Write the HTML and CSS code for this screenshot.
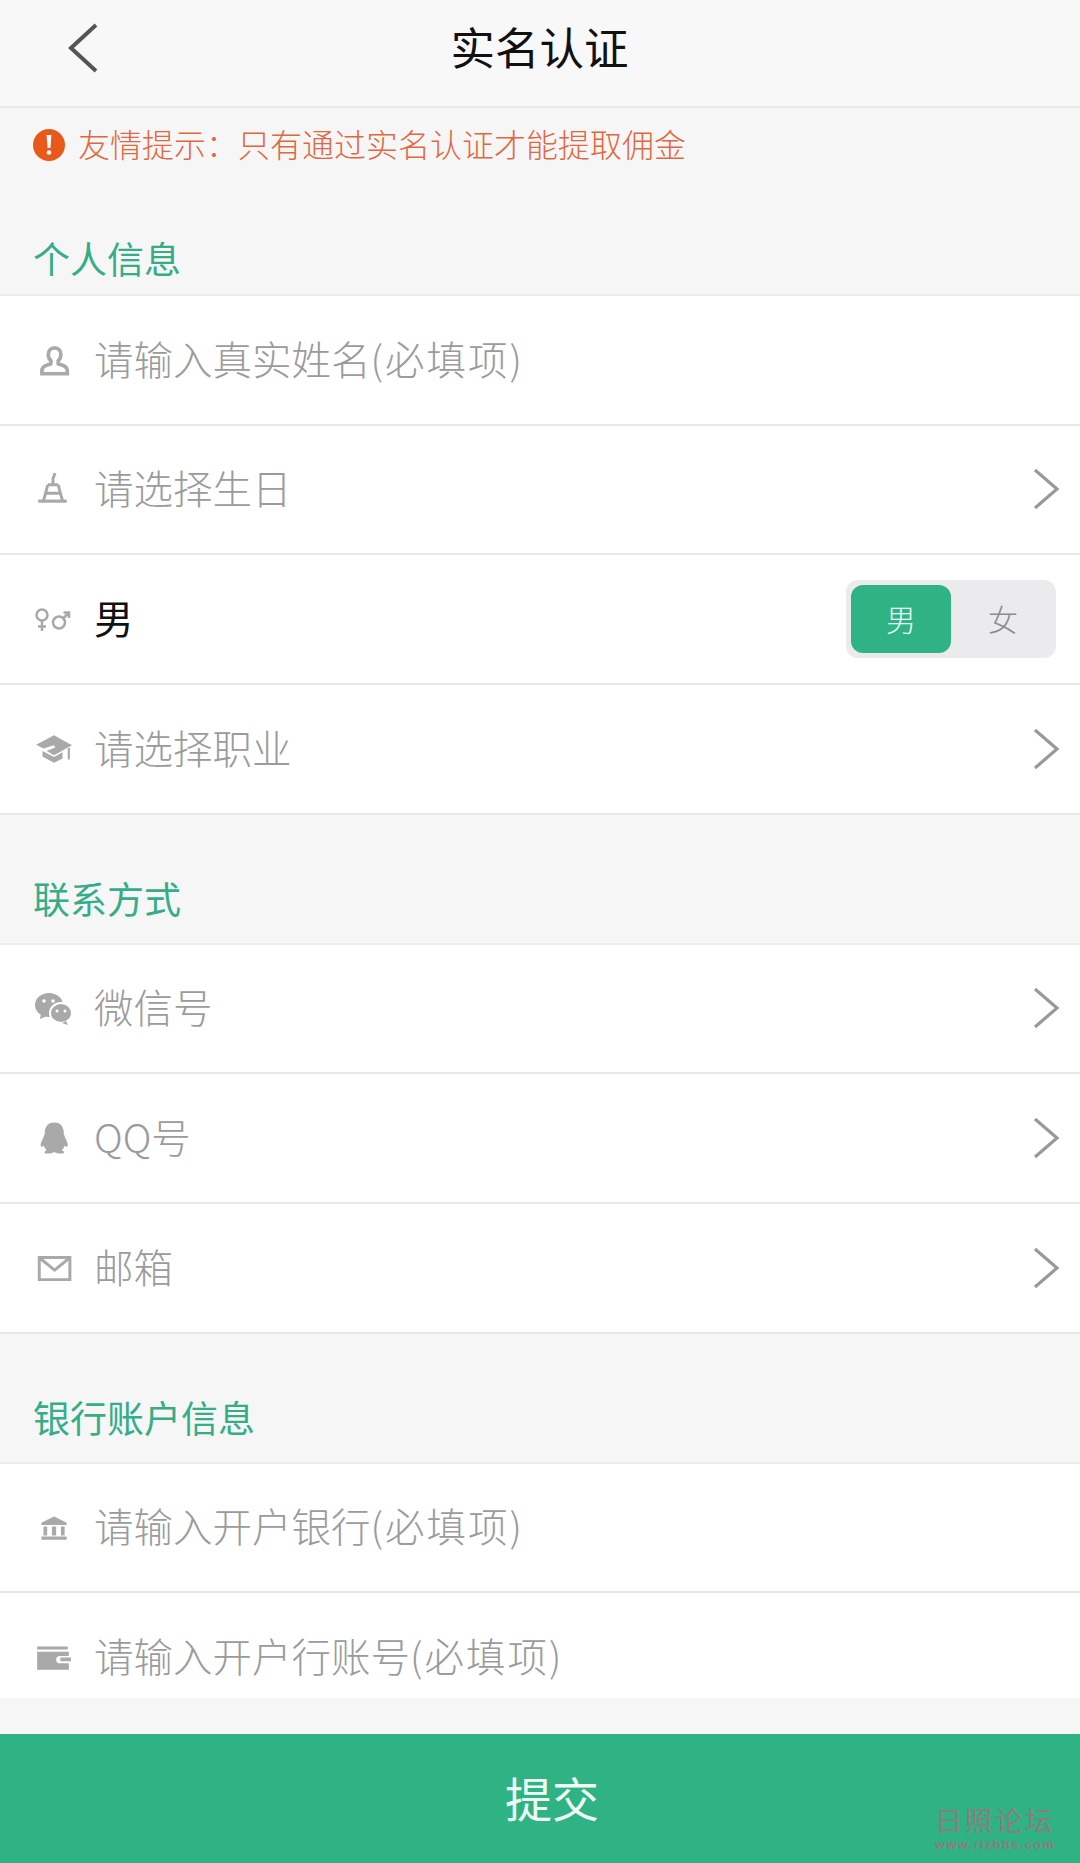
FILE: index.html
```html
<!DOCTYPE html>
<html lang="zh-CN">
<head>
  <meta charset="UTF-8" />
  <meta name="viewport" content="width=device-width, initial-scale=1.0" />
  <title>实名认证</title>
  <link rel="stylesheet" href="styles.css">
</head>
<body>
  <div class="page">
    <header class="topbar">
      <svg class="back" viewBox="0 0 32 52"><path d="M29 3 L4 26 L29 49" /></svg>
      <h1>实名认证</h1>
    </header>

    <div class="notice">
      <svg class="notice-icon" viewBox="0 0 32 32"><ellipse cx="16" cy="16" rx="16" ry="16" fill="#e9591c" /><path d="M13.6 6h4.8l-1 13h-2.800z" fill="#fff" /><circle cx="16" cy="23.500" r="2.300" fill="#fff" /></svg>
      <span>友情提示：只有通过实名认证才能提取佣金</span>
    </div>

    <div class="section-title first">个人信息</div>
    <div class="group">
      <div class="row">
        <svg class="icon" viewBox="0 0 36 36"><path class="line" d="M19.500 6.500c-4 0-6 3-6 6.500 0 2.500 1.200 4.500 2.500 5.800v2.700c-2 1.500-8.500 1.500-8.500 6.500v3h24v-3c0-5-6.500-5-8.500-6.500v-2.700c1.300-1.300 2.500-3.300 2.500-5.800 0-3.500-2-6.500-6-6.500z" /></svg>
        <span class="label">请输入真实姓名<span class="req">(必填项)</span></span>
      </div>
      <div class="row">
        <svg class="icon" viewBox="0 0 36 36"><path class="line slim" d="M20 3l-2 5v6M13 14h10M13 14l-2 8h14l-2-8M11 22l-2 7M25 22l2 7" /><path fill="#a9a9a9" d="M4 28h27v3H4z" /></svg>
        <span class="label">请选择生日</span>
        <svg class="chevron" viewBox="0 0 28 44"><path d="M3 3 L25 22 L3 41" /></svg>
      </div>
      <div class="row">
        <svg class="icon" viewBox="0 0 38 36"><g class="thin"><circle cx="8" cy="14" r="5.500" /><path d="M8 19.500V30M4 25.500h8" /><circle cx="25" cy="21.500" r="6" /><path d="M29.500 17l5.500-5.500M29.500 11.500H35V17" /></g></svg>
        <span class="value">男</span>
        <div class="gender">
          <span class="gender-btn active">男</span>
          <span class="gender-btn">女</span>
        </div>
      </div>
      <div class="row">
        <svg class="icon" viewBox="0 0 36 36"><path fill="#a9a9a9" d="M19 5L2 14l7 3.500 10-3 1 2-8 3.500 7 4 17-9.500z" /><path fill="#a9a9a9" d="M8 20v5l11 6 8-4v-6l-8 4.500zM32 17h2v11h-2z" /></svg>
        <span class="label">请选择职业</span>
        <svg class="chevron" viewBox="0 0 28 44"><path d="M3 3 L25 22 L3 41" /></svg>
      </div>
    </div>

    <div class="section-title">联系方式</div>
    <div class="group">
      <div class="row">
        <svg class="icon" viewBox="-1 0 38 36"><ellipse cx="14" cy="15" rx="14" ry="12" fill="#a9a9a9" /><path d="M6 23l-1 6 7-3z" fill="#a9a9a9" /><ellipse cx="26" cy="23" rx="11" ry="10" fill="#a9a9a9" stroke="#fff" stroke-width="2" /><path d="M31 31l2 4-6-2z" fill="#a9a9a9" /><circle cx="9" cy="11" r="1.800" fill="#fff" /><circle cx="18" cy="11" r="1.800" fill="#fff" /><circle cx="22" cy="21" r="1.500" fill="#fff" /><circle cx="30" cy="21" r="1.500" fill="#fff" /></svg>
        <span class="label">微信号</span>
        <svg class="chevron" viewBox="0 0 28 44"><path d="M3 3 L25 22 L3 41" /></svg>
      </div>
      <div class="row">
        <svg class="icon" viewBox="0 0 36 36"><path fill="#a9a9a9" transform="translate(3 2.500) scale(.9)" d="M18 1c-7 0-10 5-10 11 0 2-1 3-2 6-1 2-3 6-2 8 .5 1 2 0 3-1 .5 2 2 4 3 5-2 1-3 2-2 3 1 1 7 1 10-1 3 2 9 2 10 1 1-1 0-2-2-3 1-1 2.500-3 3-5 1 1 2.500 2 3 1 1-2-1-6-2-8-1-3-2-4-2-6 0-6-3-11-10-11z" /></svg>
        <span class="label">QQ号</span>
        <svg class="chevron" viewBox="0 0 28 44"><path d="M3 3 L25 22 L3 41" /></svg>
      </div>
      <div class="row">
        <svg class="icon" viewBox="0 0 36 36"><path class="line slim" d="M5 8h29v21H5zM6 9l13.500 11L33 9" /></svg>
        <span class="label">邮箱</span>
        <svg class="chevron" viewBox="0 0 28 44"><path d="M3 3 L25 22 L3 41" /></svg>
      </div>
    </div>

    <div class="section-title">银行账户信息</div>
    <div class="group">
      <div class="row">
        <svg class="icon" viewBox="0 0 36 36"><path fill="#a9a9a9" d="M19 8L7 14v2h24v-2zM9 17.500h3.500V26H9zM17 17.500h4V26h-4zM25.500 17.500H29V26h-3.500zM7 27h24v3H7z" /></svg>
        <span class="label">请输入开户银行<span class="req">(必填项)</span></span>
      </div>
      <div class="row last">
        <svg class="icon" viewBox="0 0 36 36"><path fill="#a9a9a9" d="M3 8h29v3H3zM3 13h30v4h-8c-3 0-4 1.500-4 3.500s1 3.500 4 3.500h8v6H3zM25 18.500h10v3.500H25z" /></svg>
        <span class="label">请输入开户行账号<span class="req">(必填项)</span></span>
      </div>
    </div>

    <button class="submit">提交</button>
    <div class="watermark">
      <div class="wm-name">日照论坛</div>
      <div class="wm-url">www.rizbbs.com</div>
    </div>
  </div>
</body>
</html>
```

FILE: styles.css
```css
:root {
  --bg: #f6f6f7;
  --green: #2fb384;
  --title-green: #35ad86;
  --line: #e8e8e8;
  --muted: #9b9b9b;
}

* {
  box-sizing: border-box;
}

body {
  margin: 0;
  background: var(--bg);
  font-family: "Noto Sans CJK SC", "Noto Sans", sans-serif;
  font-weight: 300;
}

.page {
  position: relative;
  display: flex;
  flex-direction: column;
  width: 1080px;
  height: 1863px;
  overflow: hidden;
}

.topbar {
  position: relative;
  flex: none;
  height: 108px;
  display: flex;
  align-items: center;
  justify-content: center;
  border-bottom: 2px solid #e9e9e9;
  background: #f8f8f8;
}

.topbar h1 {
  margin: 0 1px 16px 0;
  font-size: 44.500px;
  font-weight: 400;
  color: #111;
}

.back {
  position: absolute;
  left: 67px;
  top: 22px;
  width: 32px;
  height: 52px;
  fill: none;
  stroke: #555;
  stroke-width: 4;
}

.notice {
  flex: none;
  height: 74px;
  display: flex;
  align-items: center;
  gap: 13px;
  padding-left: 33px;
  font-size: 32px;
  color: #e0683e;
}

.notice span {
  margin-bottom: 5px;
}

.notice-icon {
  flex: none;
  width: 32px;
  height: 32px;
}

.section-title {
  flex: none;
  height: 130px;
  padding: 56px 0 0 33px;
  border-bottom: 2px solid #ececec;
  font-size: 37px;
  line-height: 54px;
  font-weight: 400;
  color: var(--title-green);
}

.section-title.first {
  height: 114px;
  padding-top: 49px;
}

.group {
  flex: none;
  background: #fff;
}

.row {
  height: 129.670px;
  display: flex;
  align-items: center;
  padding: 0 20px 0 34px;
  border-bottom: 2px solid var(--line);
}

.row.last {
  height: 105px;
  padding-top: 23px;
  border-bottom: none;
}

.icon {
  flex: none;
  width: 38px;
  height: 38px;
  margin-right: 22px;
}

.line {
  fill: none;
  stroke: #a9a9a9;
  stroke-width: 3.500;
}

.line.slim {
  stroke-width: 2.800;
}

.thin {
  fill: none;
  stroke: #a9a9a9;
  stroke-width: 2.500;
}

.label,
.value {
  flex: 1;
  margin-bottom: 5px;
  font-size: 39.500px;
  color: var(--muted);
}

.req {
  letter-spacing: 2px;
}

.value {
  color: #111;
  font-weight: 400;
}

.chevron {
  flex: none;
  width: 28px;
  height: 44px;
  margin-left: -1px;
  fill: none;
  stroke: #999;
  stroke-width: 3.200;
}

.gender {
  flex: none;
  width: 210px;
  height: 78px;
  display: flex;
  padding: 5px;
  margin-right: 4px;
  border-radius: 12px;
  background: #ebebed;
}

.gender-btn {
  width: 50%;
  display: flex;
  align-items: center;
  justify-content: center;
  padding: 0 0 2px 4px;
  font-size: 30px;
  color: #8c8c8c;
}

.gender-btn.active {
  padding-left: 0;
  border-radius: 12px;
  background: var(--green);
  color: #e8fff5;
}

.submit {
  position: absolute;
  left: 0;
  bottom: 0;
  width: 1080px;
  height: 129px;
  padding: 0 0 5px 24px;
  border: none;
  background: var(--green);
  color: #f0fbf6;
  font-family: inherit;
  font-size: 47px;
  font-weight: 400;
}

.watermark {
  position: absolute;
  right: 25px;
  bottom: 11px;
  width: 120px;
  color: #8b7d7b;
  text-align: center;
}

.wm-name {
  font-family: "Liberation Sans", "Noto Sans CJK SC", sans-serif;
  font-size: 27.500px;
  font-weight: 400;
  line-height: 30px;
  letter-spacing: 2.500px;
  white-space: nowrap;
}

.wm-url {
  font-family: "Liberation Sans", sans-serif;
  font-size: 13px;
  font-weight: 700;
  line-height: 15px;
  letter-spacing: 1.300px;
  white-space: nowrap;
}
```
